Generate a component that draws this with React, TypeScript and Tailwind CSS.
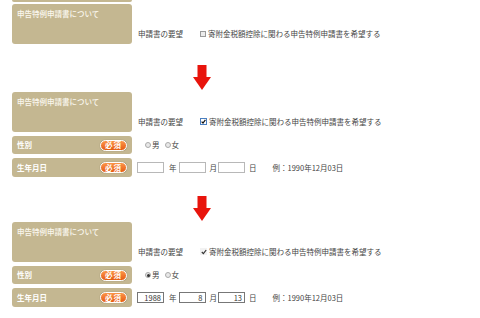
import React from "react";

const TAN = "bg-[#c4b791]";

function Arrow() {
  return (
    <svg width="18" height="25" viewBox="0 0 18 25" className="block">
      <rect x="4.5" y="0" width="9" height="13" fill="#e8140c" />
      <polygon points="0,12 18,12 9,25" fill="#e8140c" />
    </svg>
  );
}

function Badge() {
  return (
    <div className="h-[11px] w-[27px] rounded-full border border-white bg-gradient-to-b from-[#fb9548] to-[#e65a0c] shadow-[0_0_1px_rgba(0,0,0,0.4)] flex items-center justify-center text-[7.5px] leading-none">
      <span className="font-bold text-white tracking-[1px]">必須</span>
    </div>
  );
}

function Checkbox({ state }: { state: 0 | 1 | 2 }) {
  if (state === 0)
    return <span className="block w-[6px] h-[6px] border border-[#9a9a9a] bg-[#ececec]" />;
  if (state === 1)
    return (
      <span className="flex w-[7px] h-[7px] border border-[#4a7fc0] bg-white items-center justify-center">
        <svg width="5" height="5" viewBox="0 0 5 5" className="block">
          <path d="M0.6 2.6 L2 4 L4.4 0.8" stroke="#111" strokeWidth="1.2" fill="none" />
        </svg>
      </span>
    );
  return (
    <span className="flex w-[7px] h-[7px] bg-[#f2f2f2] items-center justify-center">
      <svg width="6" height="6" viewBox="0 0 6 6" className="block">
        <path d="M0.8 3 L2.4 4.6 L5.2 1" stroke="#333" strokeWidth="1.2" fill="none" />
      </svg>
    </span>
  );
}

function Radio({ checked }: { checked?: boolean }) {
  return (
    <span className="flex w-[6px] h-[6px] rounded-full border border-[#aaa] bg-[#e8e8e8] items-center justify-center">
      {checked && <span className="block w-[3px] h-[3px] rounded-full bg-[#333]" />}
    </span>
  );
}

function Field({ value }: { value?: string }) {
  return (
    <span
      className={`flex w-[27px] h-[11px] border items-center justify-end pr-[2px] bg-white text-[#333] ${
        value ? "border-[#777]" : "border-[#b8b8b8]"
      }`}
    >
      {value}
    </span>
  );
}

function BoxRow({ check }: { check: 0 | 1 | 2 }) {
  return (
    <div className="flex">
      <div className={`w-[120px] h-[40px] rounded-[3px] ${TAN} px-[5px] pt-[5px] text-[7.5px] leading-[9px] text-[#fbf8ef] font-medium`}>
        申告特例申請書について
      </div>
      <div className="flex items-end pb-[6px] pl-[6px] text-[7.5px] leading-[9px] text-[#444]">
        <span>申請書の要望</span>
        <span className="ml-[17px] mb-[1px] flex items-center">
          <Checkbox state={check} />
        </span>
        <span className="ml-[2px]">寄附金税額控除に関わる申告特例申請書を希望する</span>
      </div>
    </div>
  );
}

function LabelCell({ label, h }: { label: string; h: string }) {
  return (
    <div className={`w-[120px] ${h} rounded-[3px] ${TAN} flex items-center justify-between pl-[5px] pr-[5px] text-[7.5px] leading-none`}>
      <span className="text-white font-bold">{label}</span>
      <Badge />
    </div>
  );
}

function Block({ check, filled }: { check: 0 | 1 | 2; filled?: boolean }) {
  return (
    <div className="flex flex-col gap-[4px]">
      <BoxRow check={check} />
      <div className="flex">
        <LabelCell label="性別" h="h-[18px]" />
        <div className="flex items-center pl-[13px] text-[7.5px] leading-none text-[#444]">
          <Radio checked={filled} />
          <span className="ml-[1px]">男</span>
          <span className="ml-[5px] flex items-center">
            <Radio />
          </span>
          <span className="ml-[1px]">女</span>
        </div>
      </div>
      <div className="flex">
        <LabelCell label="生年月日" h="h-[19px]" />
        <div className="flex items-center pl-[5px] text-[7.5px] leading-none text-[#444]">
          <Field value={filled ? "1988" : undefined} />
          <span className="ml-[5px]">年</span>
          <span className="ml-[2px] flex">
            <Field value={filled ? "8" : undefined} />
          </span>
          <span className="ml-[4px]">月</span>
          <span className="ml-[1px] flex">
            <Field value={filled ? "13" : undefined} />
          </span>
          <span className="ml-[4px]">日</span>
          <span className="ml-[16px]">例：1990年12月03日</span>
        </div>
      </div>
    </div>
  );
}

export default function App() {
  return (
    <div className="w-[480px] h-[318px] bg-white overflow-hidden pl-[12px] font-['Noto_Sans_CJK_JP',sans-serif]">
      <div className={`w-[120px] h-[2px] rounded-b-[3px] ${TAN}`} />
      <div className="mt-[2px]">
        <BoxRow check={0} />
      </div>
      <div className="mt-[21px] ml-[181px]">
        <Arrow />
      </div>
      <div className="mt-[2px]">
        <Block check={1} />
      </div>
      <div className="mt-[19px] ml-[181px]">
        <Arrow />
      </div>
      <div className="mt-[1px]">
        <Block check={2} filled />
      </div>
    </div>
  );
}
